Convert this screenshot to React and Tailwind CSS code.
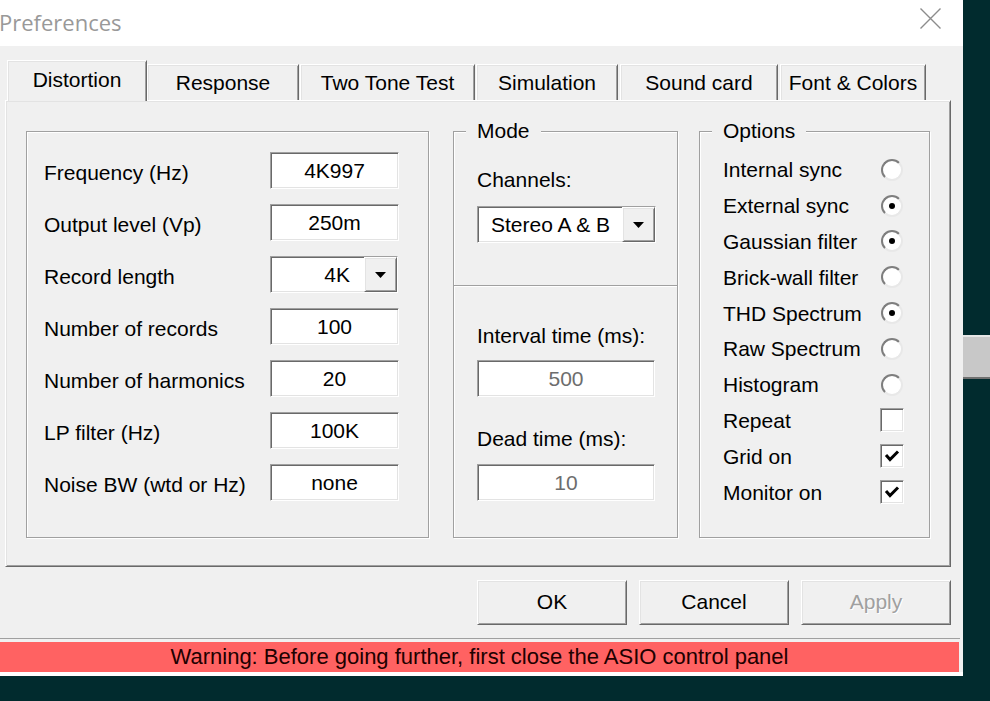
import React from "react";

const sunken =
  "border border-t-[#a0a0a0] border-l-[#a0a0a0] border-r-white border-b-white shadow-[inset_1px_1px_0_#696969,inset_-1px_-1px_0_#e3e3e3] bg-white";
const raised =
  "border border-t-white border-l-white border-r-[#696969] border-b-[#696969] shadow-[inset_1px_1px_0_#e3e3e3,inset_-1px_-1px_0_#a0a0a0] bg-[#f0f0f0]";

function Field({ value, w = "w-[129px]", disabled = false }) {
  return (
    <div
      className={`${sunken} ${w} h-[37px] flex items-center justify-center text-[21px] leading-none ${
        disabled ? "text-[#6d6d6d]" : "text-black"
      }`}
    >
      {value}
    </div>
  );
}

function Arrow() {
  return (
    <svg width="11" height="6" viewBox="0 0 11 6">
      <polygon points="0,0 11,0 5.5,6" fill="#000" />
    </svg>
  );
}

function Combo({ value, w, textClass }) {
  return (
    <div className={`${sunken} ${w} h-[37px] flex items-stretch`}>
      <div className={`flex-1 flex items-center text-[21px] leading-none ${textClass}`}>{value}</div>
      <div className={`${raised} w-[33px] flex items-center justify-center`}>
        <Arrow />
      </div>
    </div>
  );
}

function GroupBox({ title, className, children }) {
  return (
    <div
      className={`relative h-[407px] border border-[#a0a0a0] shadow-[inset_1px_1px_0_#fff,1px_1px_0_#fff] ${className}`}
    >
      {title && (
        <div className="absolute -top-[13px] left-[12px] px-[11px] bg-[#f0f0f0] text-[21px] leading-[24px]">
          {title}
        </div>
      )}
      {children}
    </div>
  );
}

function Radio({ checked }) {
  return (
    <div className="w-[22px] h-[22px] rounded-full border-2 border-t-[#7e7e7e] border-l-[#7e7e7e] border-r-[#e8e8e8] border-b-[#e8e8e8] bg-white flex items-center justify-center">
      {checked && <div className="w-[6px] h-[6px] rounded-full bg-black" />}
    </div>
  );
}

function Check({ checked }) {
  return (
    <div className={`${sunken} w-[24px] h-[24px] flex items-center justify-center`}>
      {checked && (
        <svg width="16" height="14" viewBox="0 0 16 14">
          <polyline points="2,6 6,10.5 14,2.5" fill="none" stroke="#000" strokeWidth="3" />
        </svg>
      )}
    </div>
  );
}

const leftRows = [
  ["Frequency (Hz)", "4K997"],
  ["Output level (Vp)", "250m"],
  ["Record length", "4K", true],
  ["Number of records", "100"],
  ["Number of harmonics", "20"],
  ["LP filter (Hz)", "100K"],
  ["Noise BW (wtd or Hz)", "none"],
];

const options = [
  ["Internal sync", "radio", false],
  ["External sync", "radio", true],
  ["Gaussian filter", "radio", true],
  ["Brick-wall filter", "radio", false],
  ["THD Spectrum", "radio", true],
  ["Raw Spectrum", "radio", false],
  ["Histogram", "radio", false],
  ["Repeat", "check", false],
  ["Grid on", "check", true],
  ["Monitor on", "check", true],
];

const tabs = [
  ["Response", "w-[152px] ml-0"],
  ["Two Tone Test", "w-[175px] ml-px"],
  ["Simulation", "w-[142px] ml-px"],
  ["Sound card", "w-[158px] ml-[2px]"],
  ["Font & Colors", "w-[146px] ml-[2px]"],
];

export default function App() {
  return (
    <div className="relative w-[990px] h-[701px] overflow-hidden bg-[#012b2e] font-['Liberation_Sans',Arial,sans-serif] text-black">
      <div className="absolute left-[963px] top-[335px] w-[27px] h-[44px] bg-[#c8c8c8] border-t-2 border-t-[#e6e6e6] border-b-2 border-b-[#707070]" />
      <div className="w-[963px] h-[676px] flex flex-col bg-[#f0f0f0]">
        {/* Title bar */}
        <div className="h-[46px] shrink-0 bg-white flex items-start justify-between pr-[22px]">
          <span className="mt-[9px] -ml-px font-['Open_Sans',sans-serif] text-[22px] leading-[26px] text-[#999]">
            Preferences
          </span>
          <svg className="mt-[8px]" width="21" height="21" viewBox="0 0 21 21">
            <path d="M0.5 0.5 L20.5 20.5 M20.5 0.5 L0.5 20.5" stroke="#8c8c8c" strokeWidth="1.4" />
          </svg>
        </div>

        {/* Tabs */}
        <div className="relative z-10 mt-[14px] ml-[7px] h-[40px] flex items-end">
          <div className="-mb-px w-[140px] h-[41px] bg-[#f0f0f0] border-t border-l border-t-white border-l-white border-r border-r-[#696969] shadow-[inset_1px_1px_0_#e3e3e3,inset_-1px_0_0_#a0a0a0] flex items-center justify-center pb-[3px] text-[21px] leading-none">
            Distortion
          </div>
          {tabs.map(([label, cls]) => (
            <div
              key={label}
              className={`${cls} h-[36px] bg-[#f0f0f0] border-t border-l border-t-white border-l-white border-r border-r-[#696969] shadow-[inset_1px_1px_0_#e3e3e3,inset_-1px_0_0_#a0a0a0] flex items-center justify-center text-[21px] leading-none`}
            >
              {label}
            </div>
          ))}
        </div>

        {/* Panel */}
        <div className="ml-[5px] w-[946px] h-[467px] shrink-0 border border-t-white border-l-white border-r-[#696969] border-b-[#696969] shadow-[inset_1px_1px_0_#e3e3e3,inset_-1px_-1px_0_#a0a0a0] pt-[30px] pl-[20px] flex items-start">
          <GroupBox className="w-[403px] pt-[20px] pl-[17px]">
            <div className="flex flex-col gap-[15px]">
              {leftRows.map(([label, value, combo]) => (
                <div key={label} className="flex items-center h-[37px]">
                  <div className="w-[226px] pt-[4px] text-[21px] leading-none">{label}</div>
                  {combo ? (
                    <Combo value={value} w="w-[128px]" textClass="justify-end pr-[14px]" />
                  ) : (
                    <Field value={value} />
                  )}
                </div>
              ))}
            </div>
          </GroupBox>

          <GroupBox title="Mode" className="ml-[24px] w-[225px] flex flex-col">
            <div className="h-[153px] px-[23px] pt-[36px] flex flex-col">
              <div className="text-[21px] leading-[24px]">Channels:</div>
              <div className="mt-[14px]">
                <Combo value="Stereo A & B" w="w-[179px]" textClass="pl-[13px]" />
              </div>
            </div>
            <div className="h-px bg-[#a0a0a0] shadow-[0_1px_0_#fff]" />
            <div className="px-[23px] pt-[38px] flex flex-col">
              <div className="text-[21px] leading-[24px]">Interval time (ms):</div>
              <div className="mt-[12px]">
                <Field value="500" w="w-[178px]" disabled />
              </div>
              <div className="mt-[30px] text-[21px] leading-[24px]">Dead time (ms):</div>
              <div className="mt-[13px]">
                <Field value="10" w="w-[178px]" disabled />
              </div>
            </div>
          </GroupBox>

          <GroupBox title="Options" className="ml-[21px] w-[231px] pt-[20px] pl-[23px] pr-[24px]">
            <div className="flex flex-col">
              {options.map(([label, type, checked]) => (
                <div key={label} className="h-[35.8px] flex items-center justify-between">
                  <span className="text-[21px] leading-none">{label}</span>
                  <div className="w-[26px] flex items-center justify-center">
                    {type === "radio" ? <Radio checked={checked} /> : <Check checked={checked} />}
                  </div>
                </div>
              ))}
            </div>
          </GroupBox>
        </div>

        {/* Buttons */}
        <div className="mt-[13px] h-[45px] shrink-0 flex justify-end gap-[12px] pr-[12px]">
          {["OK", "Cancel", "Apply"].map((b) => (
            <div
              key={b}
              className={`${raised} w-[150px] h-[45px] flex items-center justify-center pb-[2px] text-[21px] leading-none ${
                b === "Apply" ? "text-[#a0a0a0] [text-shadow:1px_1px_0_#fff]" : "text-black"
              }`}
            >
              {b}
            </div>
          ))}
        </div>

        {/* Warning bar */}
        <div className="mt-[13px] h-px shrink-0 w-[960px] bg-[#a0a0a0]" />
        <div className="h-[3px] shrink-0 w-[960px] bg-[#f0f0f0]" />
        <div className="h-[30px] shrink-0 w-[959px] bg-[#ff6262] flex items-center justify-center text-[22px] leading-none text-[#200000]">
          Warning: Before going further, first close the ASIO control panel
        </div>
        <div className="h-[4px] shrink-0 w-[963px] bg-white" />
      </div>
    </div>
  );
}
